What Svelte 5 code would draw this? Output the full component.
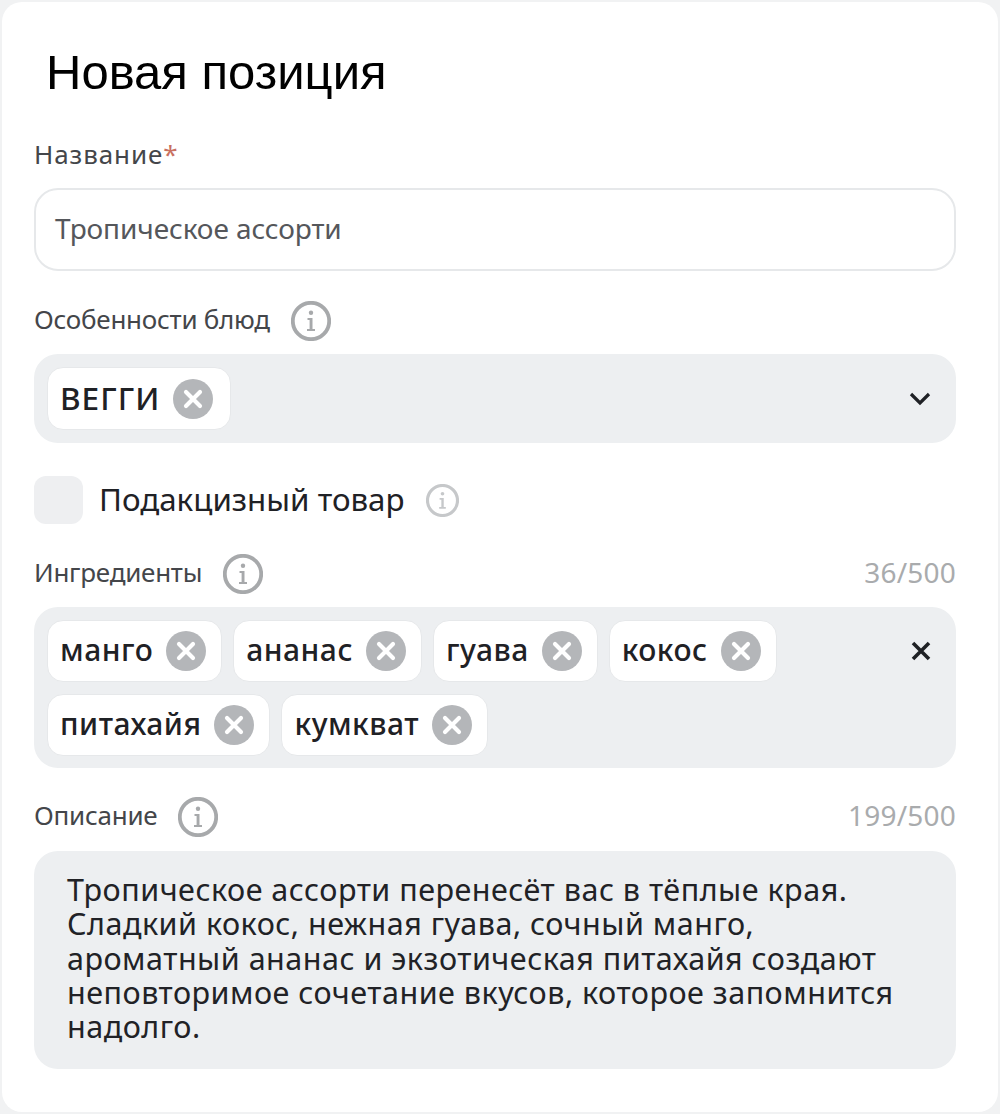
<script>
  const row1 = ['манго', 'ананас', 'гуава', 'кокос'];
  const row2 = ['питахайя', 'кумкват'];
</script>

{#snippet info(cls)}
  <svg class={cls} viewBox="0 0 40 40" aria-hidden="true">
    <circle cx="20" cy="20" r="18.2" fill="none" stroke="currentColor" stroke-width="3.8" />
    <circle cx="20" cy="11.8" r="2.2" fill="currentColor" />
    <path d="M16.5 17h5v11h2.5v2h-8v-2h2.6v-9h-2.1z" fill="currentColor" />
  </svg>
{/snippet}

{#snippet chip(text, cls)}
  <span class="chip {cls}">
    <span class="chip-text">{text}</span>
    <svg class="chip-x" viewBox="0 0 40 40" aria-hidden="true">
      <circle cx="20" cy="20" r="20" fill="#b4b6b9" />
      <path d="M13 13l14 14M27 13L13 27" stroke="#fff" stroke-width="4.2" stroke-linecap="round" />
    </svg>
  </span>
{/snippet}

<main class="card">
  <h1>Новая позиция</h1>

  <div class="label first"><span>Название<em>*</em></span></div>
  <div class="input">Тропическое ассорти</div>

  <div class="label l2"><span>Особенности блюд</span>{@render info('info')}</div>
  <div class="field select">
    <div class="chips">{@render chip('ВЕГГИ', 'caps')}</div>
    <svg class="tool chev" viewBox="0 0 24 16" aria-hidden="true">
      <path d="M3 3l9 9 9-9" fill="none" stroke="#1f2125" stroke-width="3.2" />
    </svg>
  </div>

  <div class="check-row">
    <span class="box"></span>
    <span class="check-text">Подакцизный товар</span>
    {@render info('info small')}
  </div>

  <div class="label l3">
    <span>Ингредиенты</span>{@render info('info')}
    <span class="count">36/500</span>
  </div>
  <div class="field tags">
    <div class="chip-rows">
      <div class="chips">{#each row1 as t}{@render chip(t, 'tag')}{/each}</div>
      <div class="chips">{#each row2 as t}{@render chip(t, 'tag')}{/each}</div>
    </div>
    <svg class="tool cross" viewBox="0 0 20 20" aria-hidden="true">
      <path d="M2 2l16 16M18 2L2 18" fill="none" stroke="#1f2125" stroke-width="3.6" />
    </svg>
  </div>

  <div class="label l4">
    <span>Описание</span>{@render info('info')}
    <span class="count">199/500</span>
  </div>
  <div class="area">
    Тропическое ассорти перенесёт вас в тёплые края.<br />
    Сладкий кокос, нежная гуава, сочный манго,<br />
    ароматный ананас и экзотическая питахайя создают<br />
    неповторимое сочетание вкусов, которое запомнится<br />
    надолго.
  </div>
</main>

<style>
  :global(body) {
    margin: 0;
    background: #f1f2f3;
  }
  .card {
    box-sizing: border-box;
    width: 996px;
    height: 1110px;
    margin: 2px;
    padding: 0 42px 0 32px;
    background: #fff;
    border-radius: 20px;
    font-family: 'Noto Sans', sans-serif;
    color: #212226;
    overflow: hidden;
  }
  h1 {
    margin: 0;
    padding: 40px 0 0 12px;
    font-family: 'Liberation Sans', sans-serif;
    font-size: 49px;
    line-height: 60px;
    font-weight: 400;
    color: #000;
  }
  .label {
    display: flex;
    align-items: center;
    height: 40px;
    font-size: 26px;
    letter-spacing: -0.25px;
    color: #44464a;
  }
  .label em {
    font-style: normal;
    color: #c9705f;
  }
  .first { margin-top: 33px; letter-spacing: 0.9px; }
  .first > span:first-child { margin-bottom: 0; }
  .l2 { margin-top: 29px; }
  .l3 { margin-top: 29px; }
  .l4 { margin-top: 28px; }
  .label > span:first-child { margin-bottom: 2px; }
  .info {
    flex: none;
    width: 40px;
    height: 40px;
    margin-left: 21px;
    margin-top: 2px;
    color: #a7a9ab;
  }
  .info.small {
    width: 33px;
    height: 33px;
    margin-left: 21px;
    margin-top: 0;
    color: #c6c8ca;
  }
  .count {
    margin-left: auto;
    font-size: 28px;
    letter-spacing: 0.2px;
    margin-bottom: 2px;
    color: #a9abad;
  }
  .input {
    box-sizing: border-box;
    height: 83px;
    margin-top: 13px;
    padding: 0 19px 4px;
    display: flex;
    align-items: center;
    border: 2px solid #e6e8ea;
    border-radius: 24px;
    font-size: 28px;
    letter-spacing: -0.1px;
    color: #55575b;
  }
  .field {
    display: flex;
    justify-content: space-between;
    box-sizing: border-box;
    padding: 13px 24px 13px 13px;
    background: #edeff1;
    border-radius: 24px;
  }
  .select {
    height: 89px;
    margin-top: 14px;
    align-items: center;
  }
  .tags {
    height: 161px;
    margin-top: 14px;
  }
  .chips {
    display: flex;
    gap: 11px;
  }
  .chip-rows {
    display: flex;
    flex-direction: column;
    gap: 12px;
  }
  .chip {
    display: flex;
    align-items: center;
    gap: 13px;
    box-sizing: border-box;
    height: 62px;
    padding: 0 15px 0 12px;
    background: #fff;
    border: 1px solid #e6e8ea;
    border-radius: 16px;
    font-size: 30px;
    font-weight: 500;
    letter-spacing: 0.5px;
    color: #1f2125;
  }
  .chip-text {
    margin-bottom: 3px;
  }
  .chip.caps {
    height: 63px;
    font-size: 31.5px;
    letter-spacing: 1px;
    gap: 13px;
    padding-right: 17px;
  }
  .chip-x {
    flex: none;
    width: 40px;
    height: 40px;
  }
  .tool { flex: none; }
  .chev { width: 24px; height: 16px; }
  .cross {
    width: 20px;
    height: 20px;
    margin-top: 21px;
    margin-right: 1px;
  }
  .check-row {
    display: flex;
    align-items: center;
    height: 48px;
    margin-top: 33px;
    font-size: 31.3px;
    color: #1f2125;
  }
  .box {
    width: 49px;
    height: 48px;
    border-radius: 12px;
    background: #eeeff1;
  }
  .check-text {
    margin-left: 16px;
    margin-bottom: 2px;
  }
  .area {
    box-sizing: border-box;
    height: 218px;
    margin-top: 15px;
    padding: 21px 20px 0 33px;
    background: #edeff1;
    border-radius: 24px;
    font-size: 30.5px;
    line-height: 34.25px;
    letter-spacing: 0.5px;
    color: #212226;
    white-space: nowrap;
  }
</style>
